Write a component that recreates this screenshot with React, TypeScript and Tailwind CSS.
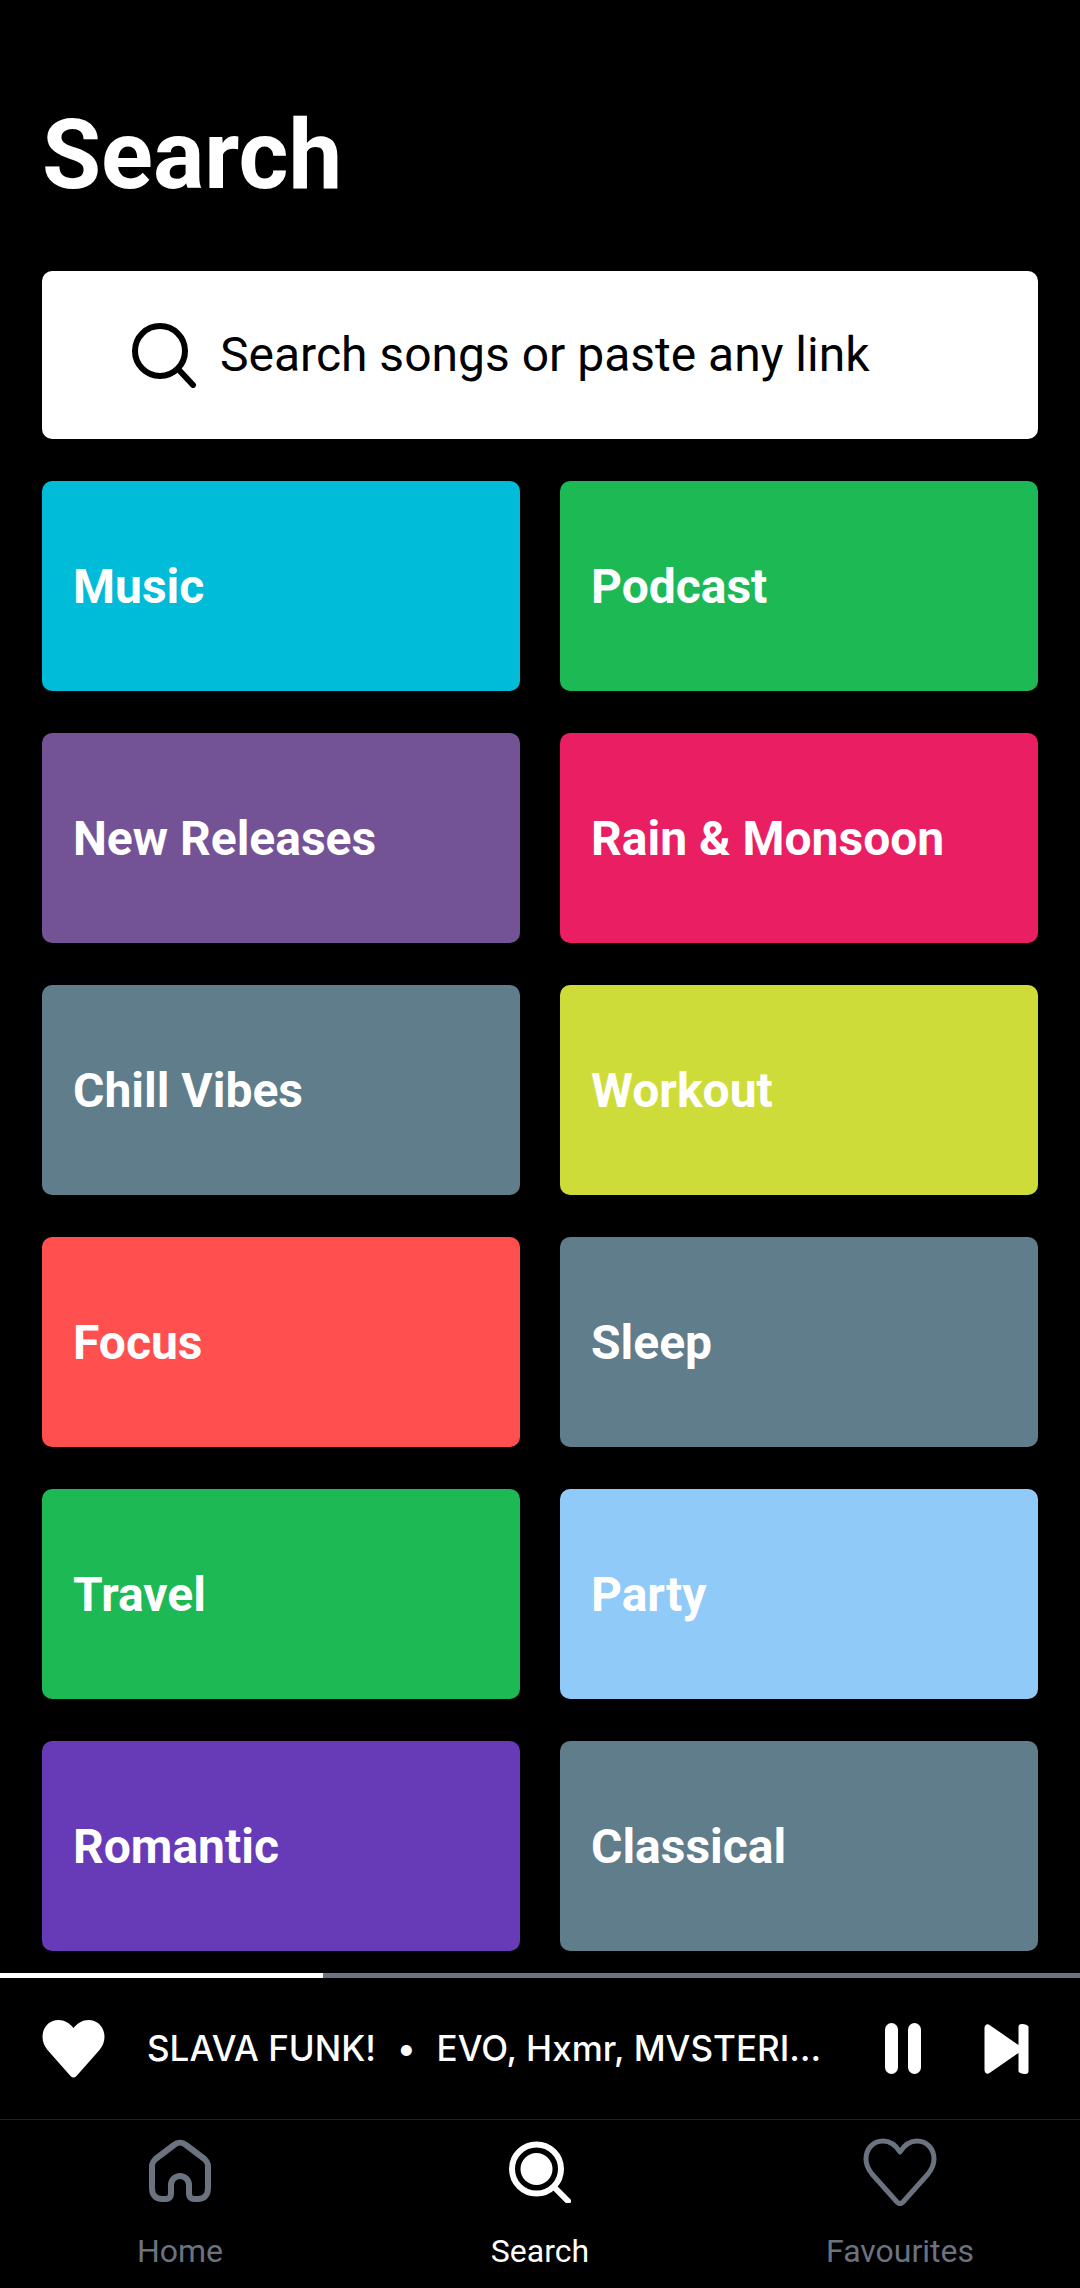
const tiles = [
  { label: "Music", color: "bg-[#00bcd9]" },
  { label: "Podcast", color: "bg-[#1db954]" },
  { label: "New Releases", color: "bg-[#745296]" },
  { label: "Rain & Monsoon", color: "bg-[#e91e63]" },
  { label: "Chill Vibes", color: "bg-[#607d8b]" },
  { label: "Workout", color: "bg-[#cddc39]" },
  { label: "Focus", color: "bg-[#ff4f4f]" },
  { label: "Sleep", color: "bg-[#607d8b]" },
  { label: "Travel", color: "bg-[#1db954]" },
  { label: "Party", color: "bg-[#90caf9]" },
  { label: "Romantic", color: "bg-[#673ab7]" },
  { label: "Classical", color: "bg-[#607d8b]" },
];

function HomeIcon() {
  return (
    <svg width="64" height="66" viewBox="0 0 64 66" fill="none" stroke="#6b7280" strokeWidth="6" strokeLinejoin="round">
      <path d="M4 27c0-3 1.500-5 3.500-7L26 6c3.500-3 8.500-3 12 0l18.500 14c2 2 3.500 4 3.500 7v22c0 7-4 11-10 11h-4c-3 0-5-2-5-5v-9c0-5-4-9-9-9s-9 4-9 9v9c0 3-2 5-5 5h-4c-6 0-10-4-10-11z" />
    </svg>
  );
}

function SearchNavIcon() {
  return (
    <svg width="62" height="62" viewBox="0 0 62 62" fill="none">
      <circle cx="27.500" cy="28" r="24.500" stroke="#fff" strokeWidth="6" />
      <circle cx="27.500" cy="28" r="16" fill="#fff" />
      <path d="M45 46l14 14" stroke="#fff" strokeWidth="6" strokeLinecap="round" />
    </svg>
  );
}

function HeartOutline() {
  return (
    <svg width="74" height="68" viewBox="0 0 74 68" fill="none" stroke="#6b7280" strokeWidth="5" strokeLinejoin="round">
      <path d="M37 14C32 6 26 3 20 3 10 3 3 11 3 21c0 6 2 10 6 15l25 28c2 2 4 2 6 0l25-28c4-5 6-9 6-15 0-10-7-18-17-18-6 0-12 3-17 11z" />
    </svg>
  );
}

function NavItem({ label, active, children }: { label: string; active?: boolean; children: React.ReactNode }) {
  return (
    <div className="flex flex-col items-center">
      <div className="h-[70px] flex items-center justify-center">{children}</div>
      <span className={`mt-[25px] text-[32px] leading-[38px] ${active ? "text-white" : "text-[#6b7280]"}`}>{label}</span>
    </div>
  );
}

export default function App() {
  return (
    <div className="w-[1080px] h-[2288px] bg-black flex flex-col overflow-hidden font-['Roboto',sans-serif]">
      {/* Header */}
      <h1 className="pt-[105px] pl-[42px] text-[96px] leading-[100px] font-bold text-white">Search</h1>

      {/* Search box */}
      <div className="mx-[42px] mt-[66px] h-[168px] bg-white rounded-[10px] flex items-center pl-[89px]">
        <svg width="66" height="66" viewBox="0 0 66 66" fill="none" stroke="#000" strokeWidth="6" strokeLinecap="round">
          <circle cx="29" cy="29" r="25" />
          <path d="M48 48l14 15" />
        </svg>
        <span className="ml-[23px] text-[48px] text-black">Search songs or paste any link</span>
      </div>

      {/* Categories */}
      <div className="mx-[42px] mt-[42px] grid grid-cols-2 gap-x-[40px] gap-y-[42px]">
        {tiles.map((t) => (
          <div key={t.label} className={`h-[210px] rounded-[10px] flex items-center pl-[31px] pt-[2px] ${t.color}`}>
            <span className="text-[48px] font-bold text-white">{t.label}</span>
          </div>
        ))}
      </div>

      {/* Progress */}
      <div className="mt-[22px] h-[5px] bg-[#6b7280]">
        <div className="h-full w-[323px] bg-white" />
      </div>

      {/* Mini player */}
      <div className="h-[142px] flex items-center border-b border-[#222] pl-[42px]">
        <svg width="63" height="58" viewBox="0 0 62 58" fill="#fff">
          <path d="M31 8C27 3 22 0 16 0 7 0 0 7 0 17c0 5 2 9 5 13l23 26c2 2 4 2 6 0l23-26c3-4 5-8 5-13C62 7 55 0 46 0c-6 0-11 3-15 8z" />
        </svg>
        <span className="ml-[42px] w-[680px] shrink-0 whitespace-nowrap overflow-hidden font-['Inter',sans-serif] font-medium text-[35px] text-white">
          SLAVA FUNK!<span className="mx-[21px]">•</span>EVO, Hxmr, MVSTERI…
        </span>
        <div className="ml-[58px] flex gap-[10px]">
          <div className="w-[13px] h-[51px] rounded-full bg-white" />
          <div className="w-[13px] h-[51px] rounded-full bg-white" />
        </div>
        <svg className="ml-[63px]" width="45" height="50" viewBox="0 0 44 50" fill="#fff">
          <path d="M0 4c0-3 3-5 5-3l29 20V3c0-2 1-3 3.500-3S44 1 44 3v44c0 2-1 3-3.500 3S34 49 34 47V29L5 49c-2 2-5 0-5-3z" />
        </svg>
      </div>

      {/* Bottom nav */}
      <div className="grid grid-cols-3 pt-[17px]">
        <NavItem label="Home"><HomeIcon /></NavItem>
        <NavItem label="Search" active><SearchNavIcon /></NavItem>
        <NavItem label="Favourites"><HeartOutline /></NavItem>
      </div>
    </div>
  );
}
